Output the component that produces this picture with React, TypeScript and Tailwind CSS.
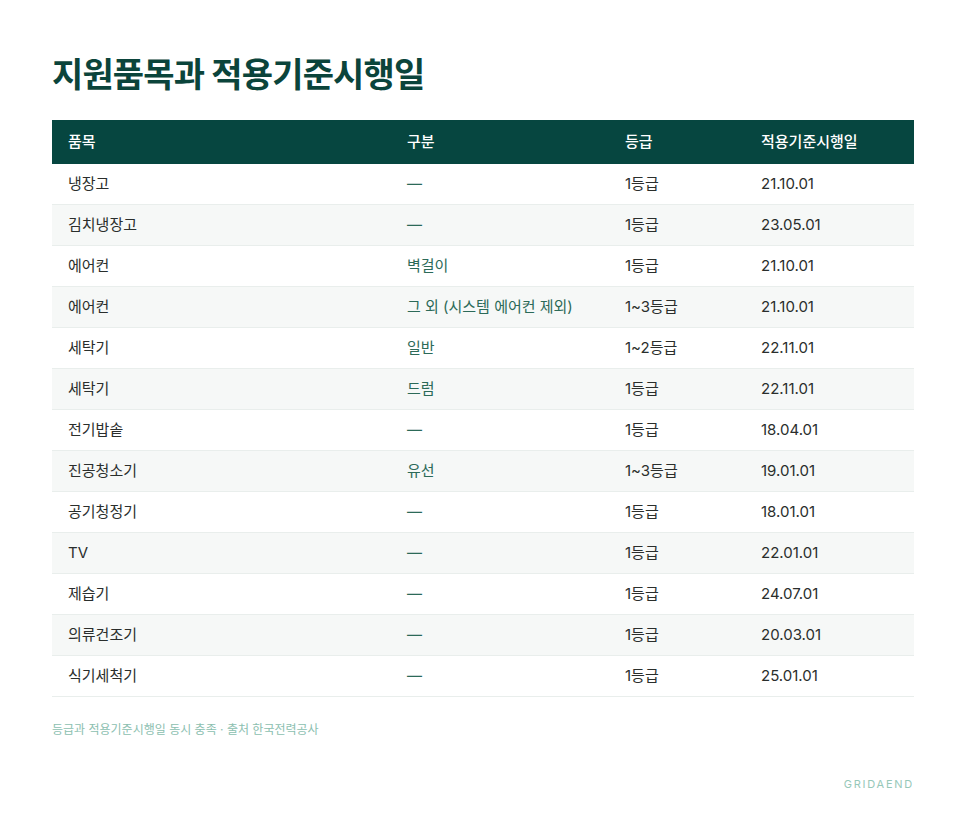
import React from "react";

const rows: [string, string, string, string][] = [
  ["냉장고", "—", "1등급", "21.10.01"],
  ["김치냉장고", "—", "1등급", "23.05.01"],
  ["에어컨", "벽걸이", "1등급", "21.10.01"],
  ["에어컨", "그 외 (시스템 에어컨 제외)", "1~3등급", "21.10.01"],
  ["세탁기", "일반", "1~2등급", "22.11.01"],
  ["세탁기", "드럼", "1등급", "22.11.01"],
  ["전기밥솥", "—", "1등급", "18.04.01"],
  ["진공청소기", "유선", "1~3등급", "19.01.01"],
  ["공기청정기", "—", "1등급", "18.01.01"],
  ["TV", "—", "1등급", "22.01.01"],
  ["제습기", "—", "1등급", "24.07.01"],
  ["의류건조기", "—", "1등급", "20.03.01"],
  ["식기세척기", "—", "1등급", "25.01.01"],
];

const font = { fontFamily: 'Inter, "Noto Sans CJK KR", sans-serif' };

export default function App() {
  return (
    <div className="w-[966px] h-[824px] bg-white px-[52px] pt-[55px]" style={font}>
      <h1 className="text-[34px] leading-[40px] font-bold tracking-[-0.025em] text-[#0b443b]">
        지원품목과 적용기준시행일
      </h1>
      <div className="mt-[25px] w-[862px]">
        <div className="grid grid-cols-[339px_218px_136px_169px] h-[44px] items-center bg-[#064640] text-white text-[15px] font-medium">
          <div className="pl-4">품목</div>
          <div className="pl-4">구분</div>
          <div className="pl-4">등급</div>
          <div className="pl-4">적용기준시행일</div>
        </div>
        {rows.map((r, i) => (
          <div
            key={i}
            className={
              "grid grid-cols-[339px_218px_136px_169px] h-[41px] items-center border-b border-[#e9eeec] text-[15px] " +
              (i % 2 === 1 ? "bg-[#f6f8f7]" : "bg-white")
            }
          >
            <div className="pl-4 text-[#2a2e2c]">{r[0]}</div>
            <div className="pl-4 text-[#2c6a58]">{r[1]}</div>
            <div className="pl-4 text-[#2a2e2c]">{r[2]}</div>
            <div className="pl-4 text-[#2a2e2c]">{r[3]}</div>
          </div>
        ))}
      </div>
      <p className="mt-[25px] text-[12px] leading-[16px] text-[#8cc0b0]">
        등급과 적용기준시행일 동시 충족 · 출처 한국전력공사
      </p>
      <div className="mt-[38px] flex justify-end">
        <span className="text-[11px] tracking-[0.16em] text-[#97c8b9]">GRIDAEND</span>
      </div>
    </div>
  );
}
